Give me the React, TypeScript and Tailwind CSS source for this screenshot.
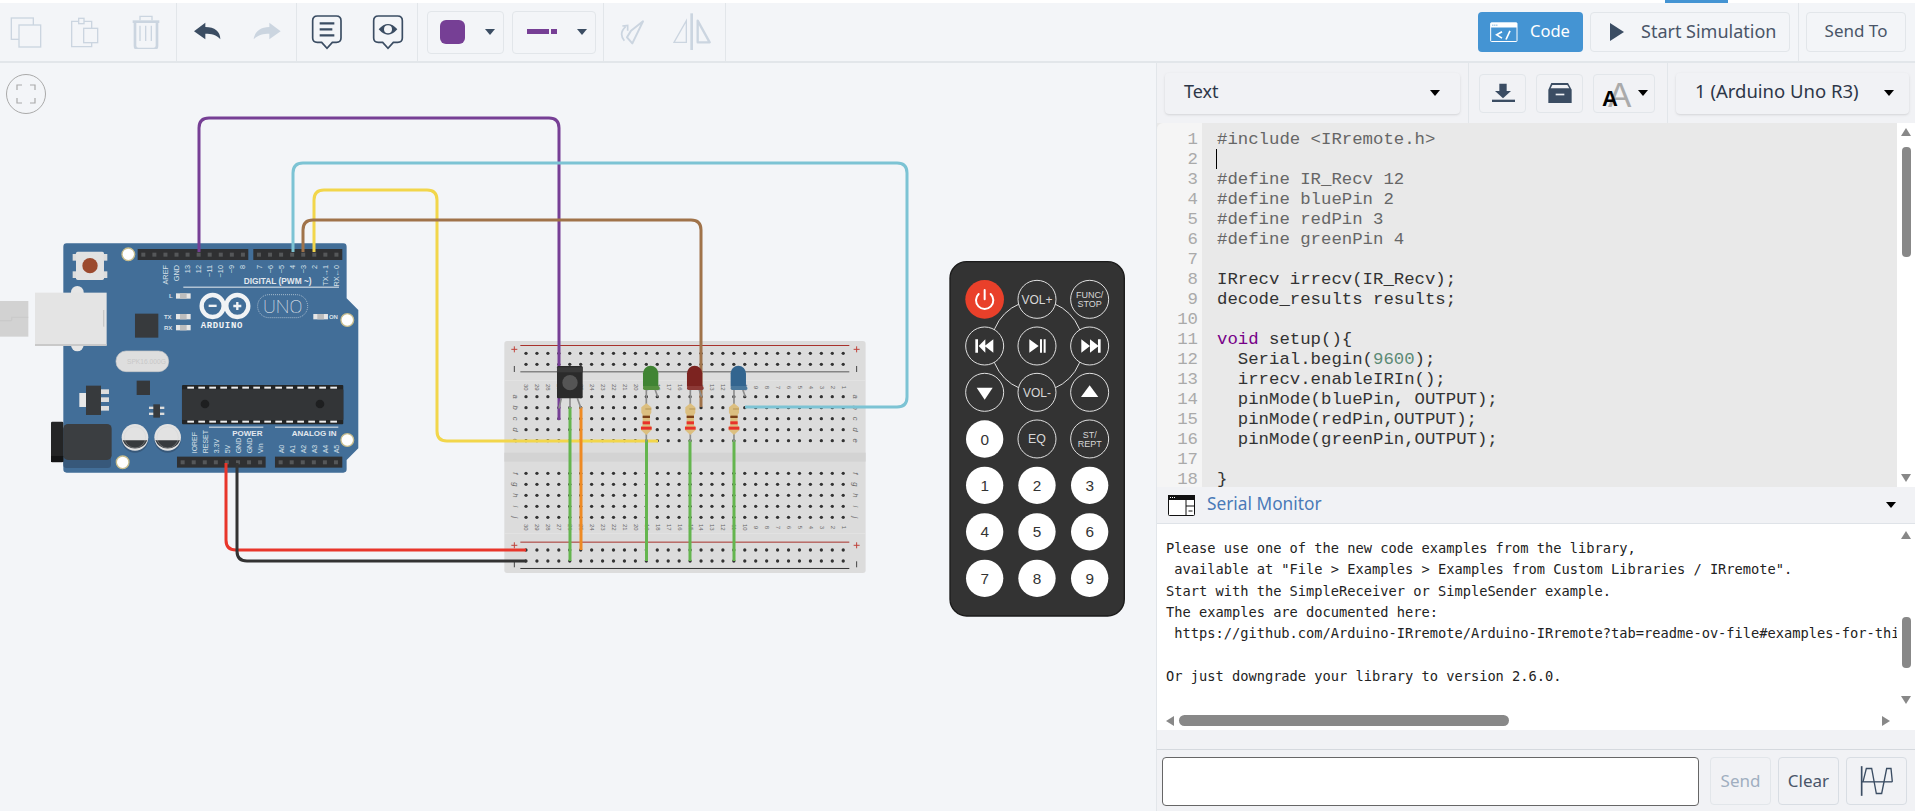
import React from 'react';

const codeLines: React.ReactNode[] = [
  <span className="text-[#666]">#include &lt;IRremote.h&gt;</span>,
  '',
  <span className="text-[#666]">#define IR_Recv 12</span>,
  <span className="text-[#666]">#define bluePin 2</span>,
  <span className="text-[#666]">#define redPin 3</span>,
  <span className="text-[#666]">#define greenPin 4</span>,
  '',
  'IRrecv irrecv(IR_Recv);',
  'decode_results results;',
  '',
  <><span className="text-[#708]">void</span> setup(){'{'}</>,
  <>  Serial.begin(<span className="text-[#5c8a75]">9600</span>);</>,
  '  irrecv.enableIRIn();',
  '  pinMode(bluePin, OUTPUT);',
  '  pinMode(redPin,OUTPUT);',
  '  pinMode(greenPin,OUTPUT);',
  '',
  '}',
];

const serialLines = [
  'Please use one of the new code examples from the library,',
  ' available at "File > Examples > Examples from Custom Libraries / IRremote".',
  'Start with the SimpleReceiver or SimpleSender example.',
  'The examples are documented here:',
  ' https://github.com/Arduino-IRremote/Arduino-IRremote?tab=readme-ov-file#examples-for-this-library',
  '',
  'Or just downgrade your library to version 2.6.0.',
];

function Caret({ className = '', color = 'border-t-black' }: { className?: string; color?: string }) {
  return <span className={`inline-block w-0 h-0 border-x-[5px] border-x-transparent border-t-[6px] ${color} ${className}`} />;
}

function Header({ x, y, w }: { x: number; y: number; w: number }) {
  const pins = [];
  const n = Math.round(w / 33);
  for (let i = 0; i < n; i++) {
    pins.push(<rect key={i} x={x + 11 + i * 33.2} y={y + 11} width={12} height={12} fill="#555759" />);
  }
  return (
    <g>
      <rect x={x} y={y} width={w} height={33} fill="#2f3032" />
      {pins}
    </g>
  );
}

function Arduino() {
  const top = [
    ['AREF', 503], ['GND', 536], ['13', 570], ['12', 603], ['~11', 636], ['~10', 669], ['~9', 702], ['8', 735],
    ['7', 786], ['~6', 819], ['~5', 852], ['4', 885], ['~3', 917], ['2', 950], ['TX→1', 983], ['RX←0', 1016],
  ] as const;
  const bottom = [
    ['IOREF', 592], ['RESET', 624], ['3.3V', 657], ['5V', 690], ['GND', 722], ['GND', 755], ['Vin', 788],
    ['A0', 852], ['A1', 885], ['A2', 917], ['A3', 950], ['A4', 983], ['A5', 1016],
  ] as const;
  const ticks = [];
  for (let i = 0; i < 14; i++) {
    ticks.push(<rect key={i} x={562 + i * 33} y={470} width={20} height={6} fill="#eee" />);
    ticks.push(<rect key={'b' + i} x={562 + i * 33} y={572} width={20} height={6} fill="#eee" />);
  }
  return (
    <g transform="translate(0 230) scale(0.3333)" className="font-['Liberation_Sans']">
      <rect x="0" y="213" width="85" height="107" fill="#d2d2d2" />
      <path d="M0 272H35V262H85" fill="none" stroke="#c4c4c4" strokeWidth="2" />
      <path d="M190 50Q190 40 200 40H1030Q1040 40 1040 50V205L1075 240V655L1040 690V718Q1040 728 1030 728H200Q190 728 190 718Z" fill="#426e98" />
      <circle cx="232" cy="187" r="19" fill="#e6e6e6" />
      <circle cx="232" cy="345" r="19" fill="#e6e6e6" />
      <rect x="105" y="188" width="215" height="158" fill="#e4e4e4" />
      <rect x="105" y="342" width="215" height="6" fill="#c9c9c9" />
      <rect x="309" y="240" width="4" height="50" fill="#c8c8c8" />
      <rect x="218" y="72" width="12" height="20" fill="#ddd" />
      <rect x="218" y="124" width="12" height="20" fill="#ddd" />
      <rect x="312" y="72" width="10" height="20" fill="#ddd" />
      <rect x="312" y="124" width="10" height="20" fill="#ddd" />
      <rect x="228" y="65" width="84" height="85" rx="5" fill="#e2e2e2" />
      <circle cx="270" cy="107" r="23" fill="#9c4a2e" />
      {[[385, 73], [1042, 270], [1042, 630], [368, 697]].map(([cx, cy]) => (
        <circle key={cx + '-' + cy} cx={cx} cy={cy} r="19" fill="#fff" stroke="#c8bd8c" strokeWidth="4" />
      ))}
      <Header x={413} y={57} w={332} />
      <Header x={760} y={57} w={267} />
      <Header x={531} y={680} w={266} />
      <Header x={825} y={680} w={202} />
      {top.map(([t, x]) => (
        <text key={t} x={x} y={105} transform={`rotate(-90 ${x} 105)`} textAnchor="end" fontSize="22" fill="#d7e0e8">{t}</text>
      ))}
      {bottom.map(([t, x], i) => (
        <text key={t + i} x={x} y={670} transform={`rotate(-90 ${x} 670)`} fontSize="21" fill="#d7e0e8">{t}</text>
      ))}
      <text x="731" y="161" fontSize="25" fontWeight="700" fill="#e2e8ee">DIGITAL (PWM ~)</text>
      <rect x="550" y="170" width="467" height="3" fill="#e8edf1" />
      <rect x="627" y="590" width="163" height="3" fill="#e8edf1" />
      <rect x="825" y="590" width="190" height="3" fill="#e8edf1" />
      <text x="697" y="619" fontSize="24" fontWeight="700" fill="#e2e8ee">POWER</text>
      <text x="875" y="619" fontSize="24" fontWeight="700" fill="#e2e8ee">ANALOG IN</text>
      <text x="507" y="205" fontSize="18" fontWeight="700" fill="#d7e0e8">L</text>
      <text x="492" y="267" fontSize="18" fontWeight="700" fill="#d7e0e8">TX</text>
      <text x="492" y="299" fontSize="18" fontWeight="700" fill="#d7e0e8">RX</text>
      <text x="987" y="266" fontSize="18" fontWeight="700" fill="#d7e0e8">ON</text>
      {[[528, 190], [528, 252], [528, 285], [940, 252]].map(([x, y]) => (
        <g key={x + '-' + y}>
          <rect x={x} y={y} width={44} height={16} fill="#e6e6e6" />
          <rect x={x + 12} y={y} width={20} height={16} fill="#bdbdbd" />
        </g>
      ))}
      <circle cx="638" cy="228" r="33" fill="none" stroke="#f1f3f5" strokeWidth="13" />
      <circle cx="712" cy="228" r="33" fill="none" stroke="#f1f3f5" strokeWidth="13" />
      <rect x="626" y="224" width="24" height="7" fill="#f1f3f5" />
      <path d="M700 228H724M712 216V240" stroke="#f1f3f5" strokeWidth="7" />
      <text x="602" y="294" fontSize="27" fontWeight="700" letterSpacing="2" fill="#f1f3f5" className="font-['Liberation_Mono']">ARDUINO</text>
      <rect x="773" y="194" width="150" height="69" rx="34" fill="none" stroke="#dce4ea" strokeWidth="2" strokeDasharray="3 3" />
      <text x="789" y="250" fontSize="56" fontWeight="100" fill="#eef1f4" textLength="118" lengthAdjust="spacingAndGlyphs" className="font-['Roboto']">UNO</text>
      <rect x="405" y="251" width="70" height="72" fill="#373a3d" />
      <rect x="348" y="363" width="158" height="62" rx="30" fill="#dedede" stroke="#c9c9c9" strokeWidth="2" />
      <text x="381" y="401" fontSize="20" fill="#c8c8c8">SPK16.000G</text>
      <rect x="410" y="452" width="40" height="43" fill="#35383b" />
      <rect x="303" y="478" width="24" height="14" fill="#ddd" />
      <rect x="303" y="502" width="24" height="14" fill="#ddd" />
      <rect x="303" y="528" width="24" height="14" fill="#ddd" />
      <rect x="238" y="489" width="24" height="42" fill="#e8e8e8" />
      <rect x="258" y="467" width="45" height="88" fill="#373a3d" />
      <rect x="447" y="530" width="46" height="7" fill="#ddd" />
      <rect x="447" y="548" width="46" height="7" fill="#ddd" />
      <rect x="460" y="523" width="20" height="40" fill="#373a3d" />
      <rect x="546" y="465" width="484" height="118" rx="3" fill="#232526" />
      <rect x="546" y="478" width="484" height="92" rx="2" fill="#333537" />
      {ticks}
      <circle cx="615" cy="522" r="13" fill="#1e1f20" />
      <circle cx="960" cy="522" r="13" fill="#1e1f20" />
      <rect x="190" y="590" width="143" height="124" rx="10" fill="#37587a" />
      <rect x="190" y="582" width="145" height="108" rx="14" fill="#3b3e41" />
      <rect x="153" y="575" width="37" height="122" rx="4" fill="#242526" />
      <rect x="153" y="678" width="37" height="18" fill="#141516" />
      {[405, 503].map((cx) => (
        <g key={cx}>
          <circle cx={cx} cy="628" r="40" fill="#37587a" />
          <circle cx={cx} cy="622" r="40" fill="#e2e2e2" />
          <path d={`M${cx - 37} 632H${cx + 37}A40 40 0 0 1 ${cx - 37} 632Z`} fill="#373a3d" transform={`translate(0 -1)`} />
          <circle cx={cx} cy="622" r="32" fill="none" stroke="#cfcfcf" strokeWidth="1" />
        </g>
      ))}
    </g>
  );
}

function Breadboard() {
  const cols = Array.from({ length: 30 }, (_, i) => 108 + i * 32.82);
  const rows = [70, 103, 200, 233, 266, 299, 332, 430, 463, 496, 529, 562, 660, 693];
  return (
    <g transform="translate(490 330) scale(0.3333)" className="font-['Liberation_Sans']">
      <rect x="43" y="33" width="1084" height="696" rx="8" fill="#dcdcdc" />
      <rect x="43" y="150" width="1084" height="2" fill="#e6e6e6" />
      <rect x="43" y="610" width="1084" height="2" fill="#e6e6e6" />
      <rect x="43" y="368" width="1084" height="27" fill="#d3d3d3" />
      <rect x="91" y="45" width="987" height="3" fill="#a8322c" />
      <rect x="91" y="124" width="987" height="3" fill="#5a5a5a" />
      <rect x="91" y="635" width="987" height="3" fill="#a8322c" />
      <rect x="91" y="714" width="987" height="3" fill="#333" />
      {[[73, 58], [1100, 58], [73, 646], [1100, 646]].map(([x, y]) => (
        <path key={x + '-' + y} d={`M${x - 9} ${y}H${x + 9}M${x} ${y - 9}V${y + 9}`} stroke="#c0423a" strokeWidth="3" />
      ))}
      {[[73, 117], [1100, 117], [73, 703], [1100, 703]].map(([x, y]) => (
        <path key={x + '-' + y} d={`M${x} ${y - 9}V${y + 9}`} stroke="#444" strokeWidth="3" />
      ))}
      {rows.map((y) => cols.map((x) => (
        <g key={x + '-' + y}>
          <circle cx={x} cy={y} r="7" fill="#e2e2e2" />
          <circle cx={x} cy={y} r="5" fill="#333" />
        </g>
      )))}
      {cols.map((x, i) => (
        <g key={x} fontSize="18" fill="#666">
          <text x={x} y={172} transform={`rotate(90 ${x} 172)`} textAnchor="middle" dominantBaseline="middle">{30 - i}</text>
          <text x={x} y={592} transform={`rotate(90 ${x} 592)`} textAnchor="middle" dominantBaseline="middle">{30 - i}</text>
        </g>
      ))}
      {['a', 'b', 'c', 'd', 'e', 'f', 'g', 'h', 'i', 'j'].map((l, i) => {
        const y = i < 5 ? 200 + i * 33 : 430 + (i - 5) * 33;
        return (
          <g key={l} fontSize="23" fontStyle="italic" fill="#666">
            <text x={76} y={y} transform={`rotate(90 76 ${y})`} textAnchor="middle" dominantBaseline="middle">{l}</text>
            <text x={1094} y={y} transform={`rotate(90 1094 ${y})`} textAnchor="middle" dominantBaseline="middle">{l}</text>
          </g>
        );
      })}
    </g>
  );
}

function Resistor({ cx }: { cx: number }) {
  return (
    <g>
      <path d={`M${cx} 180V335`} stroke="#8d8d8d" strokeWidth="5" />
      <path d={`M${cx} 220L${cx + 15} 232V248L${cx + 11} 255V285L${cx + 16} 292V300L${cx} 315L${cx - 16} 300V292L${cx - 11} 285V255L${cx - 15} 248V232Z`} fill="#dcbf80" />
      <rect x={cx - 3} y="235" width="18" height="4" fill="#bfa060" />
      <rect x={cx - 11} y="257" width="22" height="7" fill="#7a3f16" />
      <rect x={cx - 11} y="274" width="22" height="9" fill="#e8322a" />
      <rect x={cx - 16} y="290" width="32" height="9" fill="#e8322a" />
    </g>
  );
}

function Led({ cx, fill, rim }: { cx: number; fill: string; rim: string }) {
  return (
    <g>
      <path d={`M${cx + 13} 178L${cx + 21} 200`} stroke="#8d8d8d" strokeWidth="5" fill="none" />
      <path d={`M${cx - 23} 170V130A23 23 0 0 1 ${cx + 23} 130V170Z`} fill={fill} />
      <rect x={cx - 23} y="168" width="50" height="12" rx="5" fill={rim} />
    </g>
  );
}

function BoardParts() {
  return (
    <g transform="translate(490 330) scale(0.3333)">
      <path d="M240 200V235M214 205L207 235M262 205L273 235" stroke="#8d8d8d" strokeWidth="5" fill="none" />
      <rect x="201" y="108" width="77" height="97" rx="4" fill="#2b2b2b" />
      <rect x="201" y="112" width="77" height="15" fill="#3a3a3a" />
      <circle cx="240" cy="158" r="23" fill="#555" />
      {[469, 601, 732].map((cx) => <Resistor key={cx} cx={cx} />)}
      <Led cx={482} fill="#408433" rim="#55903f" />
      <Led cx={614} fill="#7c2320" rim="#8c3936" />
      <Led cx={745} fill="#33658f" rim="#4a789c" />
    </g>
  );
}

function Btn({ x, y, lines, white, size = 36 }: { x: number; y: number; lines?: string[]; white?: boolean; size?: number }) {
  return (
    <g>
      <circle cx={x} cy={y} r={white ? 56 : 57} fill={white ? '#fff' : '#333'} stroke={white ? 'none' : '#e0e0e0'} strokeWidth="3" />
      {lines && lines.length === 1 && (
        <text x={x} y={y + size * 0.36} textAnchor="middle" fontSize={size} fill={white ? '#333' : '#d8d8d8'}>{lines[0]}</text>
      )}
      {lines && lines.length === 2 && (
        <>
          <text x={x} y={y - 3} textAnchor="middle" fontSize={size} fill="#d8d8d8">{lines[0]}</text>
          <text x={x} y={y + size - 3} textAnchor="middle" fontSize={size} fill="#d8d8d8">{lines[1]}</text>
        </>
      )}
    </g>
  );
}

function Remote() {
  const xs = [134, 291, 449];
  return (
    <g transform="translate(940 250) scale(0.3333)" className="font-['Liberation_Sans']">
      <rect x="30" y="35" width="523" height="1063" rx="50" fill="#333" stroke="#1b1b1b" strokeWidth="4" />
      <circle cx="291" cy="288" r="137" fill="none" stroke="#e0e0e0" strokeWidth="3" />
      <circle cx="134" cy="148" r="58" fill="#e9402a" />
      <path d="M116 132A26 26 0 1 0 152 132M134 120V148" fill="none" stroke="#fff" strokeWidth="6" strokeLinecap="round" />
      <Btn x={291} y={148} lines={['VOL+']} size={36} />
      <Btn x={449} y={148} lines={['FUNC/', 'STOP']} size={27} />
      <Btn x={134} y={288} />
      <path d="M106 268H114V308H106ZM160 268V308L134 288ZM136 268V308L116 288Z" fill="#fff" />
      <Btn x={291} y={288} />
      <path d="M268 268L296 288L268 308ZM300 268H306V308H300ZM311 268H317V308H311Z" fill="#fff" />
      <Btn x={449} y={288} />
      <path d="M424 268L450 288L424 308ZM450 268L476 288L450 308ZM474 268H482V308H474Z" fill="#fff" />
      <Btn x={134} y={427} />
      <path d="M110 413H158L134 449Z" fill="#fff" />
      <Btn x={291} y={427} lines={['VOL-']} size={36} />
      <Btn x={449} y={427} />
      <path d="M423 441H475L449 406Z" fill="#fff" />
      <Btn x={134} y={567} white lines={['0']} size={46} />
      <Btn x={291} y={567} lines={['EQ']} size={37} />
      <Btn x={449} y={567} lines={['ST/', 'REPT']} size={27} />
      {[[1, 2, 3], [4, 5, 6], [7, 8, 9]].map((row, r) => row.map((n, c) => (
        <Btn key={n} x={xs[c]} y={706 + r * 139.5} white lines={[String(n)]} size={46} />
      )))}
    </g>
  );
}

function Wires() {
  const w = { fill: 'none', strokeWidth: 3, strokeLinejoin: 'round' as const };
  return (
    <g>
      <path d="M199 252V128Q199 118 209 118H549Q559 118 559 128V420" stroke="#763f95" {...w} />
      <path d="M293 252V173Q293 163 303 163H897Q907 163 907 173V397Q907 407 897 407H745" stroke="#7cc3d4" {...w} />
      <path d="M314 252V200Q314 190 324 190H427Q437 190 437 200V431Q437 441 447 441H658" stroke="#f2d64b" {...w} />
      <path d="M303 252V230Q303 220 313 220H691Q701 220 701 230V407" stroke="#a0734a" {...w} />
      <path d="M226 463V540Q226 550 236 550H526" stroke="#e8362b" {...w} />
      <path d="M237 463V551Q237 561 247 561H526" stroke="#333" {...w} />
      <path d="M581 407V550" stroke="#ee8a23" {...w} />
      <path d="M570 407V561" stroke="#64b54e" {...w} />
      <path d="M646.5 440V561" stroke="#64b54e" {...w} />
      <path d="M690 440V561" stroke="#64b54e" {...w} />
      <path d="M734 440V561" stroke="#64b54e" {...w} />
    </g>
  );
}

function Toolbar() {
  const dark = '#3b4d63';
  const light = '#cbd5e0';
  return (
    <div className="h-[60px] shrink-0 flex border-b-2 border-[#e2e6ea] bg-[#f3f5f8]">
      <div className="w-[177px] flex items-center pl-[10px] gap-[28px] border-r border-[#e2e6ea]">
        <svg width="32" height="32" viewBox="30 50 96 96">
          <rect x="34" y="56" width="66" height="64" fill="none" stroke={light} strokeWidth="4" />
          <rect x="57" y="77" width="65" height="66" fill="#f3f5f8" stroke={light} strokeWidth="4" />
        </svg>
        <svg width="32" height="32" viewBox="210 50 96 96">
          <path d="M236 66H215V142H275V66H252" fill="none" stroke={light} strokeWidth="4" />
          <rect x="236" y="57" width="16" height="16" fill="none" stroke={light} strokeWidth="4" />
          <rect x="251" y="87" width="42" height="43" fill="#f3f5f8" stroke={light} strokeWidth="4" />
        </svg>
        <svg width="32" height="34" viewBox="390 44 96 102">
          <path d="M398 64H478" stroke={light} strokeWidth="8" />
          <path d="M420 60V48H456V60" fill="none" stroke={light} strokeWidth="4" />
          <path d="M405 68V136Q405 146 415 146H461Q471 146 471 136V68" fill="none" stroke={light} strokeWidth="8" />
          <path d="M420 76V122M437 76V122M454 76V122" stroke={light} strokeWidth="4" />
        </svg>
      </div>
      <div className="w-[120px] flex items-center justify-center gap-[32px] border-r border-[#e2e6ea]">
        <svg width="28" height="24" viewBox="580 64 84 72">
          <path d="M583 98L617 72V85C645 85 662 98 662 122C650 108 635 105 617 105V122Z" fill={dark} />
        </svg>
        <svg width="28" height="24" viewBox="757 64 84 72">
          <path d="M840 98L806 72V85C780 85 762 98 759 122C772 108 788 105 806 105V122Z" fill={light} />
        </svg>
      </div>
      <div className="w-[121px] flex items-center pl-[14px] gap-[29px] border-r border-[#e2e6ea]">
        <svg width="32" height="36" viewBox="936 50 96 108">
          <path d="M955 56H1012Q1026 56 1026 70V122Q1026 135 1012 135H1000L984 153L968 135H955Q941 135 941 122V70Q941 56 955 56Z" fill="none" stroke={dark} strokeWidth="5" />
          <path d="M962 78H1006M962 96H1000M962 114H1006" stroke={dark} strokeWidth="7" />
        </svg>
        <svg width="32" height="36" viewBox="1116 50 96 108">
          <path d="M1135 56H1193Q1207 56 1207 70V122Q1207 135 1193 135H1180L1164 153L1148 135H1135Q1121 135 1121 122V70Q1121 56 1135 56Z" fill="none" stroke={dark} strokeWidth="5" />
          <path d="M1136 96Q1164 64 1192 96Q1164 128 1136 96Z" fill={dark} />
          <circle cx="1164" cy="96" r="12" fill="#f3f5f8" />
        </svg>
      </div>
      <div className="w-[186px] flex items-center pl-[9px] gap-[8px] border-r border-[#e2e6ea]">
        <button className="w-[77px] h-[43px] rounded border border-[#e2e6ea] flex items-center pl-[12px] pr-[8px] justify-between">
          <span className="w-[25px] h-[24px] rounded-md bg-[#763f95]" />
          <Caret color="border-t-[#3b4d63]" />
        </button>
        <button className="w-[84px] h-[43px] rounded border border-[#e2e6ea] flex items-center pl-[14px] pr-[8px] justify-between">
          <svg width="31" height="6" viewBox="0 0 31 6">
            <rect width="22" height="5" fill="#763f95" />
            <rect x="24" width="6" height="5" fill="#763f95" />
          </svg>
          <Caret color="border-t-[#3b4d63]" />
        </button>
      </div>
      <div className="w-[122px] flex items-center pl-[15px] gap-[26px] border-r border-[#e2e6ea]">
        <svg width="28" height="28" viewBox="624 60 84 84">
          <path d="M696 70L660 98L648 118L664 136Z" fill="none" stroke={light} strokeWidth="6" strokeLinejoin="round" />
          <path d="M640 128Q622 106 644 86M634 84L650 82L650 98" fill="none" stroke={light} strokeWidth="5" />
        </svg>
        <svg width="38" height="40" viewBox="795 40 114 120">
          <path d="M835 66V131H798Z" fill="none" stroke={light} strokeWidth="4" />
          <path d="M851 44V154" stroke={light} strokeWidth="8" />
          <path d="M869 66L905 131H869Z" fill="none" stroke={light} strokeWidth="7" strokeLinejoin="round" />
        </svg>
      </div>
      <div className="flex-1" />
      <div className="flex items-center gap-[7px] pr-[8px] border-r border-[#e2e6ea] text-[17px] text-[#4a5568]">
        <button className="w-[105px] h-[40px] rounded bg-[#4494d3] text-white flex items-center pl-[12px] pb-[2px] gap-[12px]">
          <svg width="28" height="21" viewBox="90 68 84 62" className="mt-[2px]">
            <rect x="92" y="70" width="79" height="56" rx="2" fill="none" stroke="#fff" strokeWidth="3" />
            <path d="M92 70H171V84H92Z" fill="#fff" />
            <path d="M97 77H115" stroke="#4494d3" strokeWidth="3" strokeDasharray="3 3" />
            <path d="M126 97L110 106L126 116M150 94L138 120" fill="none" stroke="#fff" strokeWidth="5" />
          </svg>
          <span className="text-[16.5px]">Code</span>
        </button>
        <button className="w-[200px] h-[40px] rounded border border-[#e2e6ea] flex items-center pl-[19px] pb-[2px] gap-[17px]">
          <svg width="14" height="18" viewBox="0 0 14 18" className="mt-[2px]"><path d="M0 0L14 9L0 18Z" fill="#3b4d63" /></svg>
          <span className="text-[18px]">Start Simulation</span>
        </button>
      </div>
      <div className="flex items-center pl-[7px] pr-[9px] text-[17px] text-[#4a5568]">
        <button className="w-[100px] h-[40px] rounded border border-[#e2e6ea] pb-[2px]">Send To</button>
      </div>
    </div>
  );
}

function ArrowUp() {
  return <span className="block w-0 h-0 border-x-[5px] border-x-transparent border-b-[8px] border-b-[#888]" />;
}
function ArrowDown() {
  return <span className="block w-0 h-0 border-x-[5px] border-x-transparent border-t-[8px] border-t-[#888]" />;
}

function CodePanel() {
  return (
    <div className="h-[364px] shrink-0 flex bg-[#e9e9e9] font-['Liberation_Mono',monospace] text-[17.33px] leading-[20px] text-[#333]">
      <div className="w-[45px] shrink-0 bg-[#f5f5f5] rounded-tl-md pt-[7px] pr-[4px] text-right text-[#aaa] overflow-hidden">
        {codeLines.map((_, i) => <div key={i} className="h-[20px]">{i + 1}</div>)}
      </div>
      <div className="flex-1 relative pt-[7px] pl-[15px] overflow-hidden whitespace-pre">
        {codeLines.map((l, i) => <div key={i} className="h-[20px]">{l}</div>)}
        <span className="absolute left-[14px] top-[26px] w-px h-[20px] bg-black" />
      </div>
      <div className="w-[18px] shrink-0 bg-white flex flex-col items-center pt-[5px] pb-[5px]">
        <ArrowUp />
        <span className="block w-[9px] h-[110px] mt-[11px] rounded bg-[#888]" />
        <span className="flex-1" />
        <ArrowDown />
      </div>
    </div>
  );
}

function RightPanel() {
  return (
    <div className="w-[759px] shrink-0 flex flex-col border-l border-[#e2e6ea] bg-[#f1f2f5]">
      <div className="h-[60px] shrink-0 flex items-center text-[18px] text-[#2d3748]">
        <div className="h-full flex items-center pl-[8px] pr-[8px] border-r border-[#e2e6ea]">
          <button className="w-[295px] h-[41px] rounded bg-[#f1f2f5] shadow flex items-center justify-between pl-[19px] pr-[20px]">
            <span className="-mt-[4px]">Text</span>
            <Caret />
          </button>
        </div>
        <div className="h-full flex items-center pl-[10px] gap-[10px] pr-[12px] border-r border-[#e2e6ea]">
          <button className="w-[47px] h-[39px] rounded border border-[#e2e6ea] flex items-center justify-center">
            <svg width="24" height="22" viewBox="88 258 72 60">
              <path d="M113 260H135V282H148L124 304L100 282H113Z" fill="#3b4d63" />
              <rect x="91" y="308" width="69" height="7" fill="#3b4d63" />
            </svg>
          </button>
          <button className="w-[47px] h-[39px] rounded border border-[#e2e6ea] flex items-center justify-center">
            <svg width="24" height="22" viewBox="262 250 72 64">
              <path d="M272 252H322L333 272V312H263V272Z" fill="#3b4d63" />
              <path d="M275 258H320L326 268H270Z" fill="#f1f2f5" />
              <rect x="285" y="284" width="26" height="5" fill="#f1f2f5" />
            </svg>
          </button>
          <button className="w-[62px] h-[39px] rounded border border-[#e2e6ea] flex items-center pl-[8px] font-['Liberation_Sans']">
            <span className="relative block w-[36px] h-[28px]">
              <span className="absolute left-[6px] -top-[2px] text-[35px] leading-[35px] text-[#aaa]">A</span>
              <span className="absolute left-0 top-[9px] text-[22px] leading-[22px] font-bold text-black">A</span>
            </span>
            <Caret />
          </button>
        </div>
        <div className="h-full flex items-center pl-[8px]">
          <button className="w-[233px] h-[41px] rounded bg-[#f1f2f5] shadow flex items-center justify-between pl-[19px] pr-[15px]">
            <span className="-mt-[4px] text-[18.5px]">1 (Arduino Uno R3)</span>
            <Caret />
          </button>
        </div>
      </div>
      <CodePanel />
      <div className="h-[37px] shrink-0 flex items-center border-b border-[#dfe3e8] pl-[11px] pr-[19px]">
        <svg width="27" height="21" viewBox="0 0 27 21">
          <rect x=".5" y=".5" width="26" height="20" rx="1" fill="#fff" stroke="#111" />
          <rect width="27" height="5" fill="#111" />
          <path d="M2 2.5H8" stroke="#fff" strokeDasharray="1 1" />
          <path d="M18 5V20M18 11H27" stroke="#111" />
          <path d="M20.5 16H24.5" stroke="#111" />
        </svg>
        <span className="ml-[12px] -mt-[2px] text-[17.3px] text-[#4a7ab8]">Serial Monitor</span>
        <span className="flex-1" />
        <Caret />
      </div>
      <div className="h-[187px] shrink-0 flex bg-white">
        <div className="flex-1 overflow-hidden pt-[14px] pl-[9px] font-['DejaVu_Sans_Mono',monospace] text-[13.7px] leading-[21.33px] text-[#222] whitespace-pre">
          {serialLines.map((l, i) => <div key={i} className="h-[21.33px]">{l}</div>)}
        </div>
        <div className="w-[18px] shrink-0 flex flex-col items-center pt-[7px] pb-[7px]">
          <ArrowUp />
          <span className="block w-[9px] h-[51px] mt-[78px] rounded bg-[#888]" />
          <span className="flex-1" />
          <ArrowDown />
        </div>
      </div>
      <div className="h-[19px] shrink-0 flex items-center bg-white pl-[9px] pr-[25px]">
        <span className="block w-0 h-0 border-y-[5px] border-y-transparent border-r-[8px] border-r-[#888]" />
        <span className="block w-[330px] h-[11px] ml-[5px] rounded-full bg-[#888]" />
        <span className="flex-1" />
        <span className="block w-0 h-0 border-y-[5px] border-y-transparent border-l-[8px] border-l-[#888]" />
      </div>
      <div className="h-[20px] shrink-0 border-b border-[#d5d9de]" />
      <div className="flex-1 flex items-start pt-[7px] pl-[5px] gap-[7px] text-[17px]">
        <input className="w-[537px] h-[49px] mr-[4px] bg-white border border-[#666] rounded-sm" />
        <button className="w-[61px] h-[48px] rounded border border-[#e2e6ea] text-[#a0aec0]">Send</button>
        <button className="w-[61px] h-[48px] rounded border border-[#d8dde3] text-[#4a5568]">Clear</button>
        <button className="w-[61px] h-[48px] rounded border border-[#d8dde3] flex items-center justify-center">
          <svg width="35" height="32" viewBox="50 45 105 95" fill="none" stroke="#3b4d63" strokeWidth="5">
            <path d="M58 48V137" />
            <path d="M58 95H150" strokeWidth="4" />
            <path d="M62 95L72 55H88L102 130H118L133 55H146L150 95" strokeWidth="4" />
          </svg>
        </button>
      </div>
    </div>
  );
}

export default function App() {
  return (
    <div className="w-[1915px] h-[811px] flex flex-col overflow-hidden bg-[#f3f5f8] font-['Noto_Sans',sans-serif]">
      <div className="h-[3px] shrink-0 flex bg-white shadow">
        <div className="w-[1665px]" />
        <div className="w-[63px] bg-[#4494d3]" />
      </div>
      <Toolbar />
      <div className="flex-1 flex min-h-0">
        <div className="relative flex-1 overflow-hidden">
          <button className="absolute top-[11px] left-[6px] w-[40px] h-[40px] rounded-full border border-[#aaa] flex items-center justify-center">
            <svg width="20" height="20" viewBox="0 0 20 20" fill="none" stroke="#aaa" strokeWidth="1.2">
              <path d="M1 6V1H6M14 1H19V6M19 14V19H14M6 19H1V14" />
            </svg>
          </button>
          <svg width="1156" height="748" viewBox="0 63 1156 748" className="block">
            <Arduino />
            <Breadboard />
            <Wires />
            <BoardParts />
            <Remote />
          </svg>
        </div>
        <RightPanel />
      </div>
    </div>
  );
}
